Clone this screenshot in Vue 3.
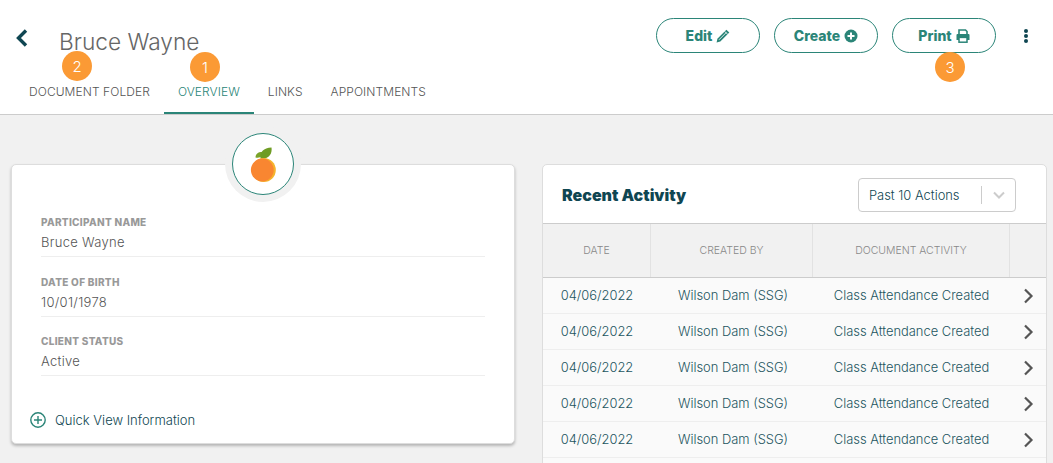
<script setup>
const tabs = ['DOCUMENT FOLDER', 'OVERVIEW', 'LINKS', 'APPOINTMENTS']
const fields = [
  { label: 'PARTICIPANT NAME', value: 'Bruce Wayne' },
  { label: 'DATE OF BIRTH', value: '10/01/1978' },
  { label: 'CLIENT STATUS', value: 'Active' },
]
const rows = Array.from({ length: 5 }, () => ({
  date: '04/06/2022',
  by: 'Wilson Dam (SSG)',
  activity: 'Class Attendance Created',
}))
</script>

<template>
  <div class="page">
    <header class="header">
      <div class="top">
        <button class="back" aria-label="Back">
          <svg width="14" height="20" viewBox="0 0 14 20"><path d="M11 2.500 3.500 10l7.500 7.500" fill="none" stroke="#0f4652" stroke-width="3.400" /></svg>
        </button>
        <h1 class="name">Bruce Wayne</h1>
        <div class="actions">
          <button class="pill">Edit
            <svg width="14" height="14" viewBox="0 0 14 14">
              <path d="M10.400.7 13.300 3.600 4.300 12.600.6 13.400 1.400 9.700Z" fill="#2b8578" />
              <path d="M3 10.800 10.400 3.400" stroke="#fff" stroke-width=".8" />
              <path d="M8.600 2.300 11.700 5.400" stroke="#fff" stroke-width=".8" />
            </svg>
          </button>
          <button class="pill">Create
            <svg width="14" height="14" viewBox="0 0 14 14"><circle cx="7" cy="7" r="6.500" fill="#2b8578" /><path d="M7 3.500v7M3.500 7h7" stroke="#fff" stroke-width="2" /></svg>
          </button>
          <button class="pill">Print
            <svg width="14" height="14" viewBox="0 0 14 14">
              <path d="M3 5.500V1h6.500L11 2.500v3" fill="none" stroke="#2b8578" stroke-width="1.600" />
              <path d="M1.500 5h11q1 0 1 1v5h-13V6q0-1 1-1Z" fill="#2b8578" />
              <rect x="3" y="8.400" width="8" height="4.800" fill="#fff" stroke="#2b8578" stroke-width="1.500" />
            </svg>
          </button>
          <button class="kebab" aria-label="More"><i></i><i></i><i></i></button>
        </div>
      </div>
      <nav class="tabs">
        <a v-for="tab in tabs" :key="tab" class="tab" :class="{ active: tab === 'OVERVIEW' }">{{ tab }}</a>
      </nav>
      <span class="badge b1">1</span>
      <span class="badge b2">2</span>
      <span class="badge b3">3</span>
    </header>

    <main class="content">
      <section class="card info">
        <div class="avatar">
          <svg width="30" height="38" viewBox="0 0 30 38">
            <path d="M7.500 12.500c0-3.500 2.500-5.500 6.500-5.500 1 3.500-1 6.500-6.500 5.500Z" fill="#7aa32a" />
            <path d="M12.500 13.500c-1-6.500 3-10.500 11-11 1 6.500-3 12-11 11Z" fill="#6f9c24" />
            <circle cx="15.800" cy="25" r="12" fill="#f5b32c" />
            <circle cx="14.300" cy="25" r="11.400" fill="#f98631" />
          </svg>
        </div>
        <div class="fields">
          <div v-for="f in fields" :key="f.label" class="field">
            <div class="label">{{ f.label }}</div>
            <div class="value">{{ f.value }}</div>
          </div>
        </div>
        <a class="quick">
          <svg width="16" height="16" viewBox="0 0 16 16"><circle cx="8" cy="8" r="7.200" fill="none" stroke="#2b8578" stroke-width="1.400" /><path d="M8 4v8M4 8h8" stroke="#2b8578" stroke-width="1.400" /></svg>
          Quick View Information
        </a>
      </section>

      <section class="card activity">
        <div class="activity-head">
          <h2>Recent Activity</h2>
          <div class="select">
            <span class="select-text">Past 10 Actions</span>
            <span class="select-arrow">
              <svg width="12" height="8" viewBox="0 0 12 8"><path d="M1 1.500 6 6.500l5-5" fill="none" stroke="#ccc" stroke-width="2" /></svg>
            </span>
          </div>
        </div>
        <div class="grid thead">
          <div>DATE</div>
          <div>CREATED BY</div>
          <div>DOCUMENT ACTIVITY</div>
          <div></div>
        </div>
        <div class="tbody">
          <div v-for="(r, i) in rows" :key="i" class="grid row">
            <div>{{ r.date }}</div>
            <div class="by">{{ r.by }}</div>
            <div>{{ r.activity }}</div>
            <div>
              <svg width="11" height="16" viewBox="0 0 11 16"><path d="M2 1.500 8.500 8 2 14.500" fill="none" stroke="#555" stroke-width="2.200" /></svg>
            </div>
          </div>
        </div>
      </section>
    </main>
  </div>
</template>

<style scoped>
.page {
  height: 463px;
  overflow: hidden;
  background: #f1f1f1;
  font-family: Inter, "Liberation Sans", sans-serif;
  color: #555;
}

.header {
  position: relative;
  height: 115px;
  box-sizing: border-box;
  background: #fff;
  border-bottom: 1px solid #ccc;
}

.top {
  display: flex;
  align-items: flex-start;
  height: 77px;
  padding-left: 15px;
}

.back {
  border: 0;
  background: none;
  padding: 0;
  margin-top: 28px;
  width: 44px;
  text-align: left;
  line-height: 0;
}

.name {
  margin: 27px 0 0;
  font-size: 22.700px;
  line-height: 30px;
  font-weight: 300;
  color: #666;
}

.actions {
  margin-left: auto;
  display: flex;
  gap: 14px;
  padding-top: 18px;
  padding-right: 24px;
}

.pill {
  width: 104px;
  height: 35px;
  border: 1px solid #2b8578;
  border-radius: 18px;
  background: #fff;
  color: #2b8578;
  font-family: inherit;
  font-size: 14px;
  font-weight: 800;
  display: flex;
  align-items: center;
  justify-content: center;
  gap: 4px;
  padding: 0;
}

.kebab {
  border: 0;
  background: none;
  padding: 0;
  margin-left: 13px;
  width: 6px;
  height: 35px;
  display: flex;
  flex-direction: column;
  align-items: center;
  justify-content: center;
  gap: 1px;
}

.kebab i {
  width: 4px;
  height: 4px;
  border-radius: 50%;
  background: #0f4652;
}

.tabs {
  display: flex;
  height: 37px;
  padding-left: 15px;
}

.tab {
  padding: 7px 14px 0;
  font-size: 12px;
  line-height: 16px;
  font-weight: 300;
  letter-spacing: 0.08px;
  color: #555;
  border-bottom: 2px solid transparent;
  box-sizing: border-box;
}

.tab.active {
  color: #2b8578;
  border-bottom-color: #2b8578;
}

.badge {
  position: absolute;
  width: 30px;
  height: 30px;
  border-radius: 50%;
  background: #fb9a35;
  color: #fff;
  font-size: 15px;
  font-weight: 300;
  display: flex;
  align-items: center;
  justify-content: center;
}

.b1 { left: 190px; top: 52px; }
.b2 { left: 62px; top: 51px; }
.b3 { left: 935px; top: 52px; }

.content {
  display: flex;
  align-items: flex-start;
  gap: 27px;
  padding: 49px 0 0 11px;
}

.card {
  flex: none;
  box-sizing: border-box;
  background: #fff;
  border: 1px solid #ddd;
  border-radius: 5px;
}

.info {
  position: relative;
  width: 504px;
  height: 280px;
  box-shadow: 0 2px 3px rgba(0, 0, 0, 0.25);
  padding: 46px 29px 0 29px;
}

.avatar {
  position: absolute;
  left: 220px;
  top: -32px;
  width: 62px;
  height: 62px;
  box-sizing: border-box;
  border: 1px solid #2b8578;
  border-radius: 50%;
  background: #fff;
  box-shadow: 0 0 0 7px #f1f1f1;
  display: flex;
  align-items: center;
  justify-content: center;
}

.field {
  height: 59.500px;
  box-sizing: border-box;
  padding-top: 5px;
}

.label {
  font-size: 10px;
  line-height: 12px;
  font-weight: 800;
  letter-spacing: 0.3px;
  color: #999;
}

.value {
  margin-top: 6px;
  padding-bottom: 6px;
  border-bottom: 1px solid #eee;
  font-size: 13px;
  line-height: 16px;
  font-weight: 300;
  letter-spacing: 0.3px;
  color: #555;
}

.quick {
  display: flex;
  align-items: center;
  gap: 9px;
  margin: 22px 0 0 -11px;
  font-size: 13px;
  font-weight: 300;
  color: #0f4652;
}

.activity {
  width: 505px;
  height: 320px;
  overflow: hidden;
  display: flex;
  flex-direction: column;
}

.activity-head {
  height: 58px;
  flex: none;
  box-sizing: border-box;
  display: flex;
  align-items: center;
  justify-content: space-between;
  padding: 2px 30px 0 19px;
}

.activity-head h2 {
  margin: 0;
  font-size: 16px;
  font-weight: 900;
  color: #0f4652;
}

.select {
  width: 158px;
  height: 34px;
  box-sizing: border-box;
  border: 1px solid #ccc;
  border-radius: 4px;
  display: flex;
  align-items: center;
  font-size: 12.900px;
  font-weight: 300;
  color: #0f4652;
}

.select-text {
  flex: 1;
  padding-left: 10px;
}

.select-arrow {
  width: 33px;
  height: 18px;
  border-left: 1px solid #ccc;
  display: flex;
  align-items: center;
  justify-content: center;
}

.grid {
  display: grid;
  grid-template-columns: 108px 162px 197px 1fr;
}

.thead {
  height: 55px;
  flex: none;
  box-sizing: border-box;
  background: #f1f1f1;
  border-top: 1px solid #ccc;
  border-bottom: 1px solid #ccc;
  font-size: 10.500px;
  font-weight: 300;
  color: #888;
}

.thead div {
  display: flex;
  align-items: center;
  justify-content: center;
  border-right: 1px solid #e2e2e2;
}

.thead div:last-child {
  border-right: 0;
}

.tbody {
  flex: 1;
  background: #fafafa;
}

.row {
  height: 36px;
  box-sizing: border-box;
  border-bottom: 1px solid #eee;
  font-size: 12.900px;
  font-weight: 300;
  color: #1c5560;
}

.row div {
  display: flex;
  align-items: center;
  justify-content: center;
}

.row .by {
  padding-left: 2px;
}
</style>

<style>
html, body {
  overflow: hidden;
}
</style>
